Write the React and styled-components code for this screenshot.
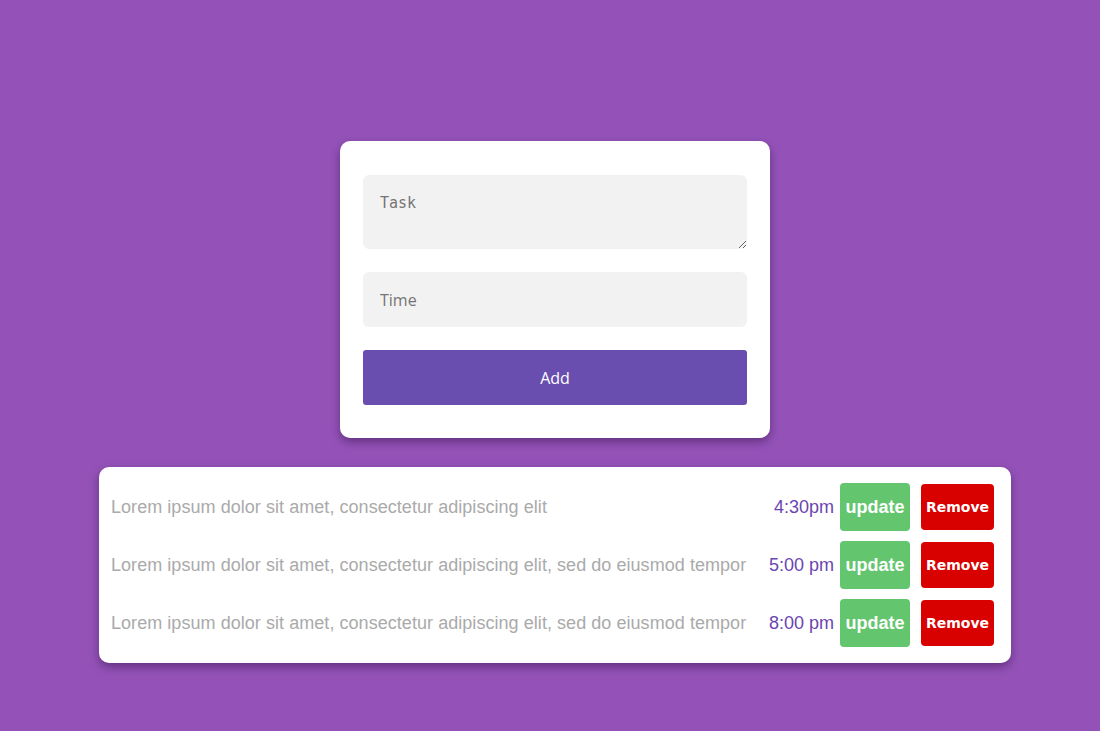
import React from "react";
import styled, { createGlobalStyle } from "styled-components";

const Global = createGlobalStyle`
  html, body { margin: 0; padding: 0; background: #9452b8; }
  body { font-family: "Liberation Sans", Arial, sans-serif; }
  * { box-sizing: border-box; }
`;

const Page = styled.div`
  width: 1100px;
  min-height: 731px;
  padding: 141px 0 0 10px;
  display: flex;
  flex-direction: column;
  align-items: center;
  gap: 29px;
`;

const FormCard = styled.form`
  width: 430px;
  background: #fff;
  border-radius: 10px;
  padding: 34px 23px 33px;
  display: flex;
  flex-direction: column;
  gap: 23px;
  box-shadow: 0 4px 10px rgba(40, 10, 60, 0.45);
`;

const TaskArea = styled.textarea`
  width: 384px;
  height: 74px;
  border: none;
  outline: none;
  border-radius: 6px;
  background: #f2f2f2;
  padding: 19px 17px 16px;
  font-family: "DejaVu Sans Mono", monospace;
  font-size: 15px;
  color: #333;
  resize: vertical;
  display: block;
  &::placeholder { color: #757575; }
`;

const TimeInput = styled.input`
  width: 384px;
  height: 55px;
  border: none;
  outline: none;
  border-radius: 6px;
  background: #f2f2f2;
  padding: 0 17px;
  font-family: "Open Sans", sans-serif;
  font-size: 16px;
  color: #333;
  &::placeholder { color: #757575; }
`;

const AddButton = styled.button`
  width: 384px;
  height: 55px;
  border: none;
  border-radius: 3px;
  background: #694eb0;
  color: #fff;
  font-family: "Open Sans", sans-serif;
  font-size: 16px;
  cursor: pointer;
`;

const ListCard = styled.div`
  width: 912px;
  background: #fff;
  border-radius: 10px;
  padding: 16px 17px 16px 12px;
  display: flex;
  flex-direction: column;
  gap: 10px;
  box-shadow: 0 4px 10px rgba(40, 10, 60, 0.45);
`;

const Row = styled.div`
  display: flex;
  align-items: center;
  height: 48px;
`;

const TaskText = styled.span`
  flex: 1;
  font-family: "Liberation Sans", Arial, sans-serif;
  font-size: 18px;
  letter-spacing: 0.05px;
  color: #aaaaaa;
  white-space: nowrap;
`;

const TimeText = styled.span`
  font-family: "Liberation Sans", Arial, sans-serif;
  font-size: 18px;
  color: #6a45b0;
  margin-right: 6px;
`;

const UpdateButton = styled.button`
  width: 70px;
  height: 48px;
  border: none;
  border-radius: 4px;
  background: #63c66e;
  color: #fff;
  font-family: "Liberation Sans", Arial, sans-serif;
  font-weight: bold;
  font-size: 18px;
  padding: 0;
  cursor: pointer;
`;

const RemoveButton = styled.button`
  width: 73px;
  height: 46px;
  margin-left: 11px;
  border: none;
  border-radius: 4px;
  background: #d90000;
  color: #fff;
  font-family: "DejaVu Sans", Verdana, sans-serif;
  font-weight: bold;
  font-size: 14px;
  padding: 0;
  cursor: pointer;
`;

const tasks = [
  { text: "Lorem ipsum dolor sit amet, consectetur adipiscing elit", time: "4:30pm" },
  { text: "Lorem ipsum dolor sit amet, consectetur adipiscing elit, sed do eiusmod tempor", time: "5:00 pm" },
  { text: "Lorem ipsum dolor sit amet, consectetur adipiscing elit, sed do eiusmod tempor", time: "8:00 pm" },
];

export default function App() {
  return (
    <>
      <Global />
      <Page>
        <FormCard onSubmit={(e) => e.preventDefault()}>
          <TaskArea placeholder="Task" />
          <TimeInput placeholder="Time" />
          <AddButton type="submit">Add</AddButton>
        </FormCard>
        <ListCard>
          {tasks.map((t, i) => (
            <Row key={i}>
              <TaskText>{t.text}</TaskText>
              <TimeText>{t.time}</TimeText>
              <UpdateButton>update</UpdateButton>
              <RemoveButton>Remove</RemoveButton>
            </Row>
          ))}
        </ListCard>
      </Page>
    </>
  );
}
